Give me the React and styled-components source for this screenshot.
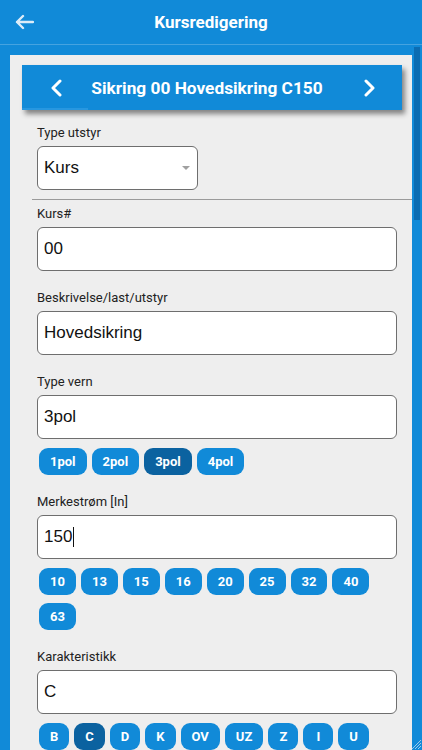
import React from 'react'
import styled, { createGlobalStyle } from 'styled-components'

const BLUE = '#118ad8'
const DARK = '#0b62a0'

const GlobalStyle = createGlobalStyle`
    html, body {
        margin: 0;
        padding: 0;
        background: ${BLUE};
        overflow: hidden;
    }
    * { box-sizing: border-box; }
`

const Screen = styled.div`
    display: flex;
    flex-direction: column;
    width: 422px;
    height: 750px;
    overflow: hidden;
    background: ${BLUE};
    font-family: Roboto, "Liberation Sans", sans-serif;
`

const TopBar = styled.header`
    display: flex;
    align-items: center;
    height: 45px;
    flex: none;
    border-bottom: 1px solid rgba(255, 255, 255, 0.22);

    h1 {
        flex: 1;
        margin: 0;
        text-align: center;
        font-size: 17px;
        font-weight: 700;
        color: #fff;
    }
`

const BackButton = styled.button`
    display: flex;
    align-items: center;
    justify-content: center;
    width: 48px;
    height: 44px;
    margin-right: -48px;
    padding: 0;
    border: 0;
    background: none;
    z-index: 1;
`

const Body = styled.div`
    display: flex;
    flex: 1;
    min-height: 0;
    padding: 2px 0 0 10px;
`

const Panel = styled.main`
    width: 402px;
    flex: none;
    margin-top: 8px;
    padding-top: 10px;
    background: #eeeeee;
`

const Track = styled.div`
    display: flex;
    flex-direction: column;
    width: 10px;
    flex: none;
`

const Thumb = styled.div`
    width: 6px;
    height: 173px;
    margin-left: 2px;
    background: #0b6cb2;
`

const Grip = styled.svg`
    margin-top: auto;
    margin-left: -3px;
`

const TitleCard = styled.div`
    display: flex;
    align-items: center;
    justify-content: space-between;
    height: 45px;
    margin: 0 10px 0 12px;
    padding: 0 26px 0 28px;
    background: ${BLUE};
    box-shadow: 3px 4px 5px rgba(0, 0, 0, 0.45);
    position: relative;

    h2 {
        margin: 0 12px 0 0;
        font-size: 17.3px;
        font-weight: 700;
        color: #fff;
    }

    &::after {
        content: '';
        position: absolute;
        left: 0;
        bottom: 0;
        width: 66px;
        height: 2px;
        background: #2797e0;
    }
`

const Arrow = styled.svg`
    flex: none;
`

const Section = styled.section`
    padding: ${p => p.$top}px 15px 0 27px;
`

const Divider = styled.hr`
    margin: 9px 0 0 22px;
    border: 0;
    border-top: 1px solid #9a9a9a;
`

const Field = styled.div`
    margin-top: ${p => (p.$first ? 0 : 19)}px;
`

const Label = styled.div`
    font-size: 13px;
    line-height: 15px;
    color: #222;
    margin-bottom: 6px;
`

const Box = styled.div`
    display: flex;
    align-items: center;
    width: ${p => p.$w || '360px'};
    height: 44px;
    padding: 0 6px;
    background: #fff;
    border: 1.5px solid #6e6e6e;
    border-radius: 6px;
    font-family: "Liberation Sans", Arial, sans-serif;
    font-size: 17px;
    color: #111;
`

const Caret = styled.span`
    display: inline-block;
    width: 1px;
    height: 20px;
    margin-left: 1px;
    background: #111;
`

const SelectArrow = styled.span`
    margin-left: auto;
    margin-right: 1px;
    border-left: 4px solid transparent;
    border-right: 4px solid transparent;
    border-top: 4px solid #a0a0a0;
`

const Chips = styled.div`
    display: flex;
    flex-wrap: wrap;
    gap: 8px 5px;
    margin-top: 9px;
    padding-left: 2px;
`

const Chip = styled.button`
    min-width: 30px;
    height: 27px;
    padding: 0 11px;
    border: 0;
    border-radius: 9px;
    background: ${p => (p.$on ? DARK : BLUE)};
    color: #fff;
    font-family: Roboto, "Liberation Sans", sans-serif;
    font-size: 13px;
    font-weight: 700;
`

const Chevron = ({ dir }) => (
    <Arrow width="14" height="18" viewBox="0 0 14 18">
        <polyline
            points={dir === 'left' ? '10,2 3,9 10,16' : '4,2 11,9 4,16'}
            fill="none" stroke="#fff" strokeWidth="3" strokeLinecap="round" strokeLinejoin="round" />
    </Arrow>
)

const ChipRow = ({ items, active }) => (
    <Chips>
        {items.map(i => <Chip key={i} $on={i === active}>{i}</Chip>)}
    </Chips>
)

const App = () => {
    return (
        <>
            <GlobalStyle />
            <Screen>
                <TopBar>
                    <BackButton>
                        <svg width="20" height="16" viewBox="0 0 20 16">
                            <path d="M19 8H3M9 2L3 8l6 6" fill="none" stroke="#dcecf8" strokeWidth="2.4" strokeLinecap="round" strokeLinejoin="round" />
                        </svg>
                    </BackButton>
                    <h1>Kursredigering</h1>
                </TopBar>
                <Body>
                    <Panel>
                        <TitleCard>
                            <Chevron dir="left" />
                            <h2>Sikring 00 Hovedsikring C150</h2>
                            <Chevron dir="right" />
                        </TitleCard>

                        <Section $top={15}>
                            <Field $first>
                                <Label>Type utstyr</Label>
                                <Box $w="161px">Kurs<SelectArrow /></Box>
                            </Field>
                        </Section>
                        <Divider />

                        <Section $top={6}>
                            <Field $first>
                                <Label>Kurs#</Label>
                                <Box>00</Box>
                            </Field>
                            <Field>
                                <Label>Beskrivelse/last/utstyr</Label>
                                <Box>Hovedsikring</Box>
                            </Field>
                            <Field>
                                <Label>Type vern</Label>
                                <Box>3pol</Box>
                                <ChipRow items={['1pol', '2pol', '3pol', '4pol']} active="3pol" />
                            </Field>
                            <Field>
                                <Label>Merkestrøm [In]</Label>
                                <Box>150<Caret /></Box>
                                <ChipRow items={['10', '13', '15', '16', '20', '25', '32', '40', '63']} />
                            </Field>
                            <Field>
                                <Label>Karakteristikk</Label>
                                <Box>C</Box>
                                <ChipRow items={['B', 'C', 'D', 'K', 'OV', 'UZ', 'Z', 'I', 'U']} active="C" />
                            </Field>
                        </Section>
                    </Panel>
                    <Track>
                        <Thumb />
                        <Grip width="13" height="13" viewBox="0 0 13 13">
                            <path d="M12 3L3 12M12 6L6 12M12 9L9 12" stroke="#9cc9ea" strokeWidth="1" />
                        </Grip>
                    </Track>
                </Body>
            </Screen>
        </>
    )
}

export default App
